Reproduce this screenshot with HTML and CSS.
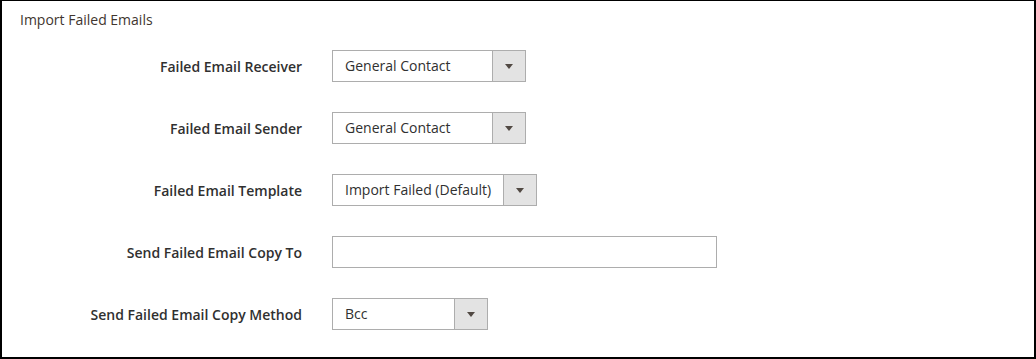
FILE: index.html
```html
<!DOCTYPE html>
<html lang="en">

<head>
	<meta charset="UTF-8">
	<title>Import Failed Emails</title>
	<link rel="stylesheet" href="styles.css">
</head>

<body>
	<div class="config-section">
		<div class="section-title">Import Failed Emails</div>
		<div class="form-rows">
			<label class="field-label">Failed Email Receiver</label>
			<div class="field-control">
				<div class="select select-receiver">
					<span class="select-value">General Contact</span>
					<span class="select-button"><span class="arrow"></span></span>
				</div>
			</div>

			<label class="field-label">Failed Email Sender</label>
			<div class="field-control">
				<div class="select select-receiver">
					<span class="select-value">General Contact</span>
					<span class="select-button"><span class="arrow"></span></span>
				</div>
			</div>

			<label class="field-label">Failed Email Template</label>
			<div class="field-control">
				<div class="select select-template">
					<span class="select-value">Import Failed (Default)</span>
					<span class="select-button"><span class="arrow"></span></span>
				</div>
			</div>

			<label class="field-label">Send Failed Email Copy To</label>
			<div class="field-control">
				<input type="text" class="text-input">
			</div>

			<label class="field-label">Send Failed Email Copy Method</label>
			<div class="field-control">
				<div class="select select-method">
					<span class="select-value">Bcc</span>
					<span class="select-button"><span class="arrow"></span></span>
				</div>
			</div>
		</div>
	</div>
</body>

</html>
```

FILE: styles.css
```css
body {
	font-family: "Open Sans", "Liberation Sans", sans-serif;
	margin: 0;
	padding: 0;
	background-color: #fff;
}

.config-section {
	box-sizing: border-box;
	width: 1036px;
	height: 359px;
	border: 2px solid #000;
	border-top-width: 1px;
	padding: 11px 0 0 18px;
}

.section-title {
	font-size: 14px;
	color: #41362f;
	line-height: 16px;
}

.form-rows {
	display: grid;
	grid-template-columns: 282px 1fr;
	column-gap: 30px;
	row-gap: 30px;
	margin-top: 22px;
}

.field-label {
	font-size: 14px;
	font-weight: 600;
	color: #303030;
	text-align: right;
	padding-top: 2px;
	line-height: 30px;
}

.field-control {
	display: flex;
	align-items: center;
}

.select {
	box-sizing: border-box;
	display: flex;
	height: 32px;
	border: 1px solid #adadad;
	background-color: #fff;
}

.select-receiver {
	width: 194px;
}

.select-template {
	width: 205px;
}

.select-method {
	width: 156px;
}

.select-value {
	flex: 1;
	padding-left: 12px;
	font-size: 14px;
	line-height: 30px;
	color: #303030;
	white-space: nowrap;
}

.select-button {
	width: 32px;
	background-color: #e3e3e3;
	border-left: 1px solid #adadad;
	display: flex;
	align-items: center;
	justify-content: center;
}

	.select-button .arrow {
		width: 0;
		height: 0;
		border-left: 4px solid transparent;
		border-right: 4px solid transparent;
		border-top: 5px solid #514943;
	}

.text-input {
	box-sizing: border-box;
	width: 385px;
	height: 32px;
	border: 1px solid #adadad;
	padding: 0 12px;
	font-family: inherit;
	font-size: 14px;
	outline: none;
}
```
